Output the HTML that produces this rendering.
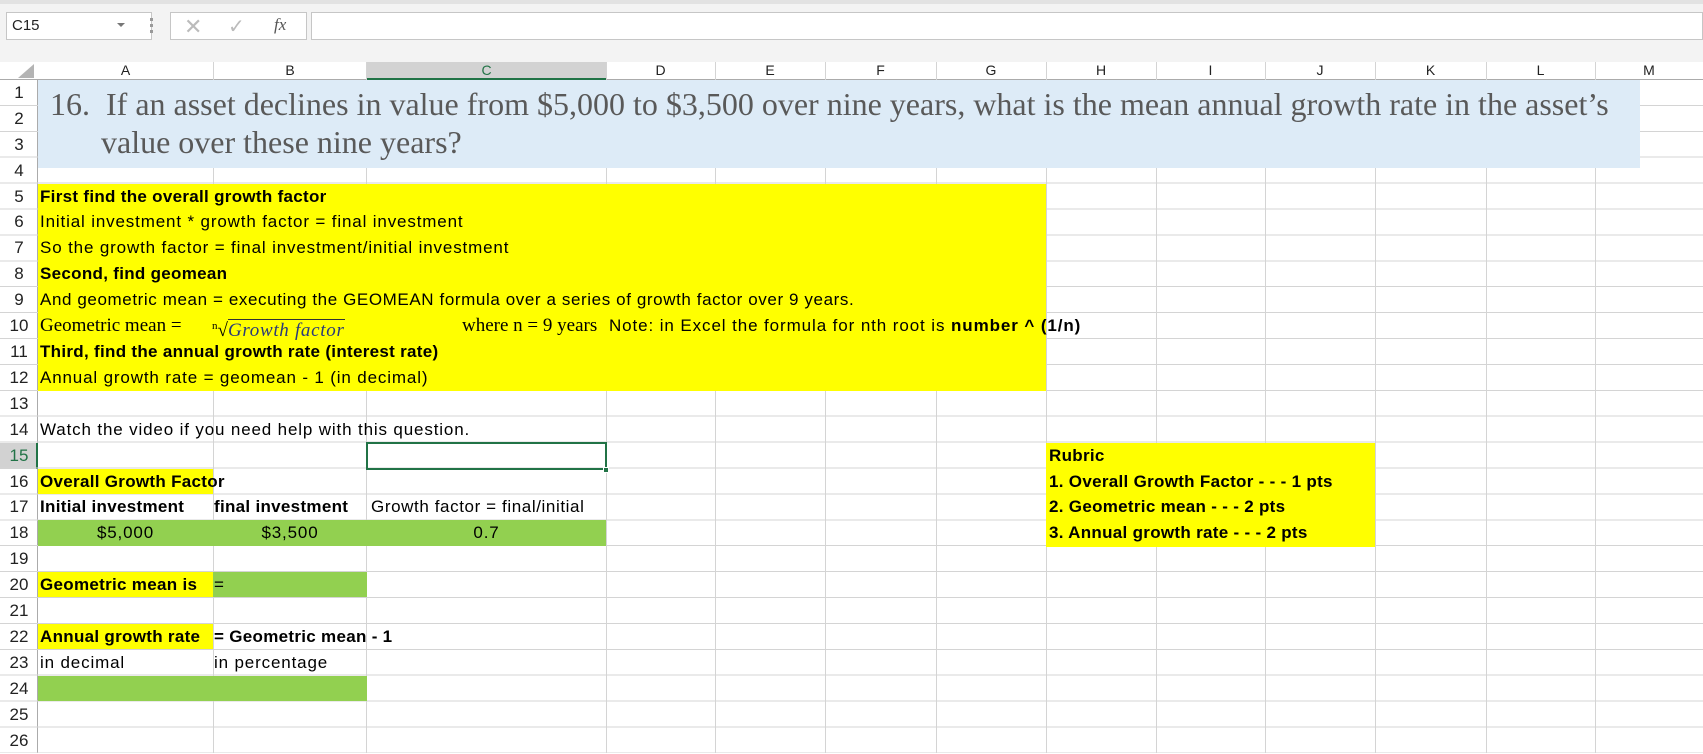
<!DOCTYPE html>
<html><head><meta charset="utf-8"><style>
*{margin:0;padding:0;box-sizing:border-box}
body{width:1703px;height:753px;overflow:hidden;background:#fff;position:relative;font-family:"Liberation Sans",sans-serif;}
.a{position:absolute}
.t{position:absolute;font-size:17px;line-height:26px;white-space:nowrap;color:#000;letter-spacing:0.85px}
.b{font-weight:bold;letter-spacing:0.3px}
.vl{position:absolute;top:62px;width:1px;height:691px;background:#d4d4d4}
.rn{position:absolute;left:0;width:38px;text-align:center;font-size:17px;line-height:26px;color:#222}
.ch{position:absolute;top:62px;height:17px;font-size:14px;line-height:17px;text-align:center;color:#222}
.serif{font-family:"Liberation Serif",serif;letter-spacing:0}
</style></head><body>
<div class="a" style="left:0;top:0;width:1703px;height:62px;background:#f3f3f3"></div>
<div class="a" style="left:0;top:0;width:1703px;height:4px;background:#e2e2e2"></div>
<div class="a" style="left:6px;top:12px;width:146px;height:28px;background:#fff;border:1px solid #c6c6c6"></div>
<div class="a" style="left:12px;top:17px;font-size:15px;color:#222">C15</div>
<div class="a" style="left:117px;top:23px;width:0;height:0;border-left:4px solid transparent;border-right:4px solid transparent;border-top:4px solid #777"></div>
<div class="a" style="left:150px;top:18px;width:3px;height:3px;background:#999;box-shadow:0 6px 0 #999,0 12px 0 #999"></div>
<div class="a" style="left:170px;top:12px;width:137px;height:28px;background:#fff;border:1px solid #c6c6c6"></div>
<div class="a" style="left:184px;top:14px;font-size:22px;color:#bbb">✕</div>
<div class="a" style="left:228px;top:14px;font-size:20px;color:#bbb">✓</div>
<div class="a serif" style="left:274px;top:15px;font-size:17px;font-style:italic;color:#555">fx</div>
<div class="a" style="left:311px;top:12px;width:1392px;height:28px;background:#fff;border:1px solid #c6c6c6"></div>
<div class="a" style="left:0;top:62px;width:1703px;height:18px;background:#fff;border-bottom:1px solid #ababab"></div>
<div class="a" style="left:0;top:80px;width:38px;height:673px;background:#fff;border-right:1px solid #ababab"></div>
<div class="a" style="left:18px;top:64px;width:0;height:0;border-left:16px solid transparent;border-bottom:14px solid #b4b4b4"></div>
<div class="a" style="left:367px;top:62px;width:239px;height:18px;background:#d2d2d2;border-bottom:2px solid #217346"></div>
<div class="a" style="left:0;top:443px;width:38px;height:26px;background:#d2d2d2;border-right:2px solid #217346"></div>
<div class="a" style="left:38px;top:80px;width:1665px;height:673px;background:repeating-linear-gradient(to bottom,transparent 0,transparent 24.9px,#d4d4d4 24.9px,#d4d4d4 25.9px)"></div>
<div class="a" style="left:0;top:80px;width:38px;height:673px;background:repeating-linear-gradient(to bottom,transparent 0,transparent 24.9px,#d4d4d4 24.9px,#d4d4d4 25.9px)"></div>
<div class="vl" style="left:213px"></div><div class="vl" style="left:366px"></div><div class="vl" style="left:606px"></div>
<div class="vl" style="left:715px"></div><div class="vl" style="left:825px"></div><div class="vl" style="left:936px"></div>
<div class="vl" style="left:1046px"></div><div class="vl" style="left:1156px"></div><div class="vl" style="left:1265px"></div>
<div class="vl" style="left:1375px"></div><div class="vl" style="left:1486px"></div><div class="vl" style="left:1595px"></div>
<div class="ch" style="left:38px;width:175px">A</div><div class="ch" style="left:213px;width:154px">B</div>
<div class="ch" style="left:367px;width:239px;color:#217346">C</div><div class="ch" style="left:606px;width:109px">D</div>
<div class="ch" style="left:715px;width:110px">E</div><div class="ch" style="left:825px;width:111px">F</div>
<div class="ch" style="left:936px;width:110px">G</div><div class="ch" style="left:1046px;width:110px">H</div>
<div class="ch" style="left:1156px;width:109px">I</div><div class="ch" style="left:1265px;width:110px">J</div>
<div class="ch" style="left:1375px;width:111px">K</div><div class="ch" style="left:1486px;width:109px">L</div>
<div class="ch" style="left:1595px;width:108px">M</div>
<div class="rn" style="top:80px">1</div><div class="rn" style="top:106px">2</div><div class="rn" style="top:132px">3</div>
<div class="rn" style="top:158px">4</div><div class="rn" style="top:184px">5</div><div class="rn" style="top:209px">6</div>
<div class="rn" style="top:235px">7</div><div class="rn" style="top:261px">8</div><div class="rn" style="top:287px">9</div>
<div class="rn" style="top:313px">10</div><div class="rn" style="top:339px">11</div><div class="rn" style="top:365px">12</div>
<div class="rn" style="top:391px">13</div><div class="rn" style="top:417px">14</div><div class="rn" style="top:443px;color:#217346">15</div>
<div class="rn" style="top:469px">16</div><div class="rn" style="top:494px">17</div><div class="rn" style="top:520px">18</div>
<div class="rn" style="top:546px">19</div><div class="rn" style="top:572px">20</div><div class="rn" style="top:598px">21</div>
<div class="rn" style="top:624px">22</div><div class="rn" style="top:650px">23</div><div class="rn" style="top:676px">24</div>
<div class="rn" style="top:702px">25</div><div class="rn" style="top:728px">26</div>
<div class="a" style="left:38px;top:80px;width:1602px;height:88px;background:#ddebf7"></div>
<div class="a" style="left:38px;top:184px;width:1008px;height:207px;background:#ffff00"></div>
<div class="a" style="left:38px;top:469px;width:175px;height:25px;background:#ffff00"></div>
<div class="a" style="left:38px;top:520px;width:568px;height:26px;background:#92d050"></div>
<div class="a" style="left:38px;top:572px;width:175px;height:25px;background:#ffff00"></div>
<div class="a" style="left:213px;top:572px;width:154px;height:25px;background:#92d050"></div>
<div class="a" style="left:38px;top:624px;width:175px;height:25px;background:#ffff00"></div>
<div class="a" style="left:38px;top:676px;width:329px;height:25px;background:#92d050"></div>
<div class="a" style="left:1046px;top:443px;width:329px;height:104px;background:#ffff00"></div>
<div class="a" style="left:366px;top:442px;width:241px;height:28px;border:2px solid #217346"></div>
<div class="a" style="left:603px;top:467px;width:6px;height:6px;background:#217346;border:1px solid #fff"></div>
<div class="a serif" style="left:50px;top:84px;font-size:32px;line-height:40px;color:#595959;white-space:nowrap">16.&nbsp;&nbsp;If an asset declines in value from $5,000 to $3,500 over nine years, what is the mean annual growth rate in the asset’s</div>
<div class="a serif" style="left:101px;top:122px;font-size:32px;line-height:40px;color:#595959;white-space:nowrap">value over these nine years?</div>
<div class="t b" style="left:40px;top:184px">First find the overall growth factor</div>
<div class="t" style="left:40px;top:209px">Initial investment * growth factor = final investment</div>
<div class="t" style="left:40px;top:235px">So the growth factor = final investment/initial investment</div>
<div class="t b" style="left:40px;top:261px">Second, find geomean</div>
<div class="t" style="left:40px;top:287px;letter-spacing:0.6px">And geometric mean = executing the GEOMEAN formula over a series of growth factor over 9 years.</div>
<div class="t serif" style="left:40px;top:313px;font-size:19px">Geometric mean =</div>
<div class="t serif" style="left:212px;top:313px;font-size:19px"><span style="font-size:11px;vertical-align:7px">n</span>√<span style="font-style:italic;color:#2a3a7a;border-top:1px solid #333;letter-spacing:0.7px">Growth factor</span></div>
<div class="t serif" style="left:462px;top:313px;font-size:19px">where n = 9 years</div>
<div class="t" style="left:609px;top:313px;letter-spacing:0.9px">Note: in Excel the formula for nth root is <b>number ^ (1/n)</b></div>
<div class="t b" style="left:40px;top:339px">Third, find the annual growth rate (interest rate)</div>
<div class="t" style="left:40px;top:365px">Annual growth rate = geomean - 1 (in decimal)</div>
<div class="t" style="left:40px;top:417px">Watch the video if you need help with this question.</div>
<div class="t b" style="left:40px;top:469px">Overall Growth Factor</div>
<div class="t b" style="left:40px;top:494px">Initial investment</div>
<div class="t b" style="left:214px;top:494px">final investment</div>
<div class="t" style="left:371px;top:494px;letter-spacing:0.6px">Growth factor = final/initial</div>
<div class="t" style="left:38px;top:520px;width:175px;text-align:center">$5,000</div>
<div class="t" style="left:213px;top:520px;width:154px;text-align:center">$3,500</div>
<div class="t" style="left:367px;top:520px;width:239px;text-align:center">0.7</div>
<div class="t b" style="left:40px;top:572px">Geometric mean is</div>
<div class="t" style="left:214px;top:572px">=</div>
<div class="t b" style="left:40px;top:624px">Annual growth rate</div>
<div class="t b" style="left:214px;top:624px">= Geometric mean - 1</div>
<div class="t" style="left:40px;top:650px">in decimal</div>
<div class="t" style="left:214px;top:650px">in percentage</div>
<div class="t b" style="left:1049px;top:443px">Rubric</div>
<div class="t b" style="left:1049px;top:469px">1. Overall Growth Factor - - - 1 pts</div>
<div class="t b" style="left:1049px;top:494px">2. Geometric mean - - - 2 pts</div>
<div class="t b" style="left:1049px;top:520px">3. Annual growth rate - - - 2 pts</div>
</body></html>
